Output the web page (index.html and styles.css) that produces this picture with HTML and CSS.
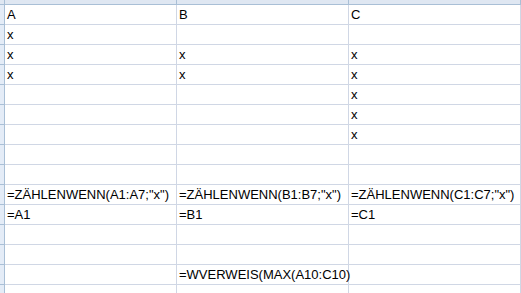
FILE: index.html
```html
<!DOCTYPE html>
<html lang="de">
<head>
<meta charset="utf-8">
<title>Tabelle</title>
<link rel="stylesheet" href="styles.css">
</head>
<body>
<div class="sheet">
  <div class="corner"></div><div class="colhead"></div><div class="colhead"></div><div class="colhead"></div>

  <div class="rowhead"></div><div class="cell">A</div><div class="cell">B</div><div class="cell">C</div>
  <div class="rowhead"></div><div class="cell">x</div><div class="cell"></div><div class="cell"></div>
  <div class="rowhead"></div><div class="cell">x</div><div class="cell">x</div><div class="cell">x</div>
  <div class="rowhead"></div><div class="cell">x</div><div class="cell">x</div><div class="cell">x</div>
  <div class="rowhead"></div><div class="cell"></div><div class="cell"></div><div class="cell">x</div>
  <div class="rowhead"></div><div class="cell"></div><div class="cell"></div><div class="cell">x</div>
  <div class="rowhead"></div><div class="cell"></div><div class="cell"></div><div class="cell">x</div>
  <div class="rowhead"></div><div class="cell"></div><div class="cell"></div><div class="cell"></div>
  <div class="rowhead"></div><div class="cell"></div><div class="cell"></div><div class="cell"></div>
  <div class="rowhead"></div><div class="cell">=ZÄHLENWENN(A1:A7;"x")</div><div class="cell">=ZÄHLENWENN(B1:B7;"x")</div><div class="cell">=ZÄHLENWENN(C1:C7;"x")</div>
  <div class="rowhead"></div><div class="cell">=A1</div><div class="cell">=B1</div><div class="cell">=C1</div>
  <div class="rowhead"></div><div class="cell"></div><div class="cell"></div><div class="cell"></div>
  <div class="rowhead"></div><div class="cell"></div><div class="cell"></div><div class="cell"></div>
  <div class="rowhead"></div><div class="cell"></div><div class="cell overflow">=WVERWEIS(MAX(A10:C10)</div><div class="cell"></div>
  <div class="rowhead"></div><div class="cell"></div><div class="cell"></div><div class="cell"></div>
</div>
</body>
</html>
```

FILE: styles.css
```css
html, body {
  margin: 0;
  padding: 0;
  background: #ffffff;
}

body {
  width: 521px;
  height: 293px;
  overflow: hidden;
}

.sheet {
  display: grid;
  grid-template-columns: 5px 172px 172px 172px;
  grid-template-rows: 5px repeat(15, 20px);
  font-family: "Liberation Sans", Arial, sans-serif;
  font-size: 13px;
  color: #000000;
}

.corner {
  background: #dfe7f2;
  border-right: 1px solid #a9bfd6;
  border-bottom: 1px solid #a9bfd6;
  box-sizing: border-box;
}

.colhead {
  background: #dfe7f2;
  border-right: 1px solid #a9bfd6;
  border-bottom: 1px solid #a9bfd6;
  box-sizing: border-box;
}

.rowhead {
  background: #e4ecf7;
  border-right: 1px solid #a9bfd6;
  border-bottom: 1px solid #a9bfd6;
  box-sizing: border-box;
}

.cell {
  box-sizing: border-box;
  border-right: 1px solid #d0d7e5;
  border-bottom: 1px solid #d0d7e5;
  padding: 2px 0 0 2px;
  line-height: 16px;
  white-space: nowrap;
  overflow: hidden;
}

.overflow {
  overflow: visible;
  position: relative;
  z-index: 1;
}
```
